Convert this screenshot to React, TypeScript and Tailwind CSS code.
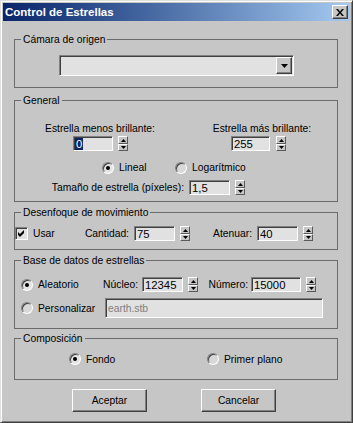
import type { ReactNode } from "react";

const sunken =
  "border border-t-[#808080] border-l-[#808080] border-b-white border-r-white shadow-[inset_1px_1px_0_#404040] bg-[#e1e1e1]";
const raised =
  "border border-t-white border-l-white border-b-[#404040] border-r-[#404040] shadow-[inset_-1px_-1px_0_#808080] bg-[#c6c6c6]";
const raisedThin =
  "border border-t-white border-l-white border-b-[#5a5a5a] border-r-[#5a5a5a] bg-[#c6c6c6]";

function Group({ title, className, children }: { title: string; className: string; children: ReactNode }) {
  return (
    <fieldset className={`w-[324px] border border-[#6b6b6b] ${className}`}>
      <legend className="ml-[6px] px-[2px] leading-[13px]">{title}</legend>
      {children}
    </fieldset>
  );
}

function Spinner({ className = "" }: { className?: string }) {
  return (
    <div className={`flex h-[15px] w-[10px] shrink-0 flex-col ${className}`}>
      <div className={`flex h-[8px] items-center justify-center ${raisedThin}`}>
        <svg width="5" height="3" viewBox="0 0 5 3">
          <path d="M2.5 0 L5 3 L0 3 Z" fill="#000" />
        </svg>
      </div>
      <div className={`flex h-[7px] items-center justify-center ${raisedThin}`}>
        <svg width="5" height="3" viewBox="0 0 5 3">
          <path d="M0 0 L5 0 L2.5 3 Z" fill="#000" />
        </svg>
      </div>
    </div>
  );
}

function NumField({ value, width, selected, className = "" }: { value: string; width: string; selected?: boolean; className?: string }) {
  return (
    <div className={`flex h-[15px] shrink-0 items-center pl-[2px] text-[11.3px] leading-[12px] ${sunken} ${width} ${className}`}>
      {selected ? (
        <span className="-ml-[1px] bg-[#0a246a] px-[1px] text-white">{value}</span>
      ) : (
        value
      )}
    </div>
  );
}

function Radio({ checked }: { checked?: boolean }) {
  return (
    <div
      className={`flex h-[12px] w-[12px] shrink-0 items-center justify-center rounded-full border border-t-[#808080] border-l-[#808080] border-b-white border-r-white shadow-[inset_1px_1px_0_#404040] ${
        checked ? "bg-[#e4e4e4]" : "bg-[#d8d8d8]"
      }`}
    >
      {checked && <div className="h-[4px] w-[4px] rounded-full bg-black" />}
    </div>
  );
}

function Checkbox() {
  return (
    <div className={`flex h-[13px] w-[13px] shrink-0 items-center justify-center ${sunken}`}>
      <svg width="7" height="7" viewBox="0 0 7 7">
        <polygon points="0,2 2,4 6,0 6,3 2,7 0,5" fill="#000" />
      </svg>
    </div>
  );
}

export default function App() {
  return (
    <div className="flex h-[423px] w-[353px] flex-col border border-t-[#e0e0e0] border-l-[#e0e0e0] border-b-[#404040] border-r-[#404040] bg-[#c6c6c6] p-[2px] font-['Liberation_Sans',Arial,sans-serif] text-[10.3px] leading-[13px] text-black shadow-[inset_1px_1px_0_#ffffff,inset_-1px_-1px_0_#808080]">
      {/* Title bar */}
      <div className="flex h-[18px] shrink-0 items-center justify-between bg-linear-to-r from-[#0a246a] to-[#a6caf0] pl-[2px] pr-[2px]">
        <span className="text-[11.5px] font-bold text-white">Control de Estrellas</span>
        <div className={`flex h-[14px] w-[16px] items-center justify-center ${raised}`}>
          <svg width="8" height="7" viewBox="0 0 8 7">
            <path d="M0 0 L2 0 L4 2.5 L6 0 L8 0 L5 3.5 L8 7 L6 7 L4 4.5 L2 7 L0 7 L3 3.5 Z" fill="#000" />
          </svg>
        </div>
      </div>

      <div className="pl-[11px]">
        {/* Cámara de origen */}
        <Group title="Cámara de origen" className="mt-[12px] h-[55px]">
          <div className={`ml-[44px] mt-[9px] flex h-[21px] w-[235px] items-center justify-end pr-[1px] ${sunken}`}>
            <div className={`flex h-[17px] w-[16px] items-center justify-center ${raised}`}>
              <svg width="7" height="4" viewBox="0 0 7 4">
                <path d="M0 0 L7 0 L3.5 4 Z" fill="#000" />
              </svg>
            </div>
          </div>
        </Group>

        {/* General */}
        <Group title="General" className="mt-[6px] h-[108px]">
          <div className="mt-[15px] flex whitespace-nowrap">
            <div className="ml-[25px] w-[120px] text-center">Estrella menos brillante:</div>
            <div className="ml-[42px] w-[120px] text-center">Estrella más brillante:</div>
          </div>
          <div className="mt-[1px] flex items-center">
            <NumField value="0" width="w-[40px]" selected className="ml-[58px]" />
            <Spinner className="ml-[5px]" />
            <NumField value="255" width="w-[39px]" className="ml-[103px]" />
            <Spinner className="ml-[6px]" />
          </div>
          <div className="mt-[10px] flex h-[13px] items-center">
            <div className="ml-[87px] flex w-[73px] items-center gap-[5px]">
              <Radio checked />
              <span>Lineal</span>
            </div>
            <div className="flex items-center gap-[5px]">
              <Radio />
              <span>Logarítmico</span>
            </div>
          </div>
          <div className="mt-[6px] flex items-center">
            <div className="w-[169px] whitespace-nowrap text-right">Tamaño de estrella (píxeles):</div>
            <NumField value="1,5" width="w-[41px]" className="ml-[5px]" />
            <Spinner className="ml-[5px]" />
          </div>
        </Group>

        {/* Desenfoque de movimiento */}
        <Group title="Desenfoque de movimiento" className="mt-[4px] h-[44px]">
          <div className="mt-[7px] flex h-[15px] items-center whitespace-nowrap">
            <Checkbox />
            <div className="ml-[5px] w-[47px]">Usar</div>
            <div className="w-[49px] text-right">Cantidad:</div>
            <NumField value="75" width="w-[41px]" className="ml-[5px]" />
            <Spinner className="ml-[5px]" />
            <div className="w-[62px] text-right">Atenuar:</div>
            <NumField value="40" width="w-[41px]" className="ml-[5px]" />
            <Spinner className="ml-[5px]" />
          </div>
        </Group>

        {/* Base de datos de estrellas */}
        <Group title="Base de datos de estrellas" className="mt-[4px] h-[75px]">
          <div className="mt-[10px] flex h-[15px] items-center whitespace-nowrap">
            <div className="ml-[6px]">
              <Radio checked />
            </div>
            <div className="ml-[5px] w-[57px]">Aleatorio</div>
            <div className="w-[43px] text-right">Núcleo:</div>
            <NumField value="12345" width="w-[41px]" className="ml-[4px]" />
            <Spinner className="ml-[5px]" />
            <div className="w-[50px] text-right">Número:</div>
            <NumField value="15000" width="w-[50px]" className="ml-[3px]" />
            <Spinner className="ml-[5px]" />
          </div>
          <div className="mt-[6px] flex h-[20px] items-center whitespace-nowrap">
            <div className="ml-[6px]">
              <Radio />
            </div>
            <div className="ml-[5px] w-[67px]">Personalizar</div>
            <div className={`flex h-[20px] w-[218px] items-center pl-[2px] text-[#808080] ${sunken}`}>earth.stb</div>
          </div>
        </Group>

        {/* Composición */}
        <Group title="Composición" className="mt-[3px] h-[48px]">
          <div className="mt-[8px] flex h-[12px] items-center">
            <div className="ml-[54px] flex w-[138px] items-center gap-[5px]">
              <Radio checked />
              <span>Fondo</span>
            </div>
            <div className="flex items-center gap-[5px]">
              <Radio />
              <span>Primer plano</span>
            </div>
          </div>
        </Group>

        {/* Buttons */}
        <div className="mt-[9px] flex">
          <button type="button" className={`ml-[58px] h-[23px] w-[75px] ${raised}`}>
            Aceptar
          </button>
          <button type="button" className={`ml-[54px] h-[23px] w-[75px] ${raised}`}>
            Cancelar
          </button>
        </div>
      </div>
    </div>
  );
}
